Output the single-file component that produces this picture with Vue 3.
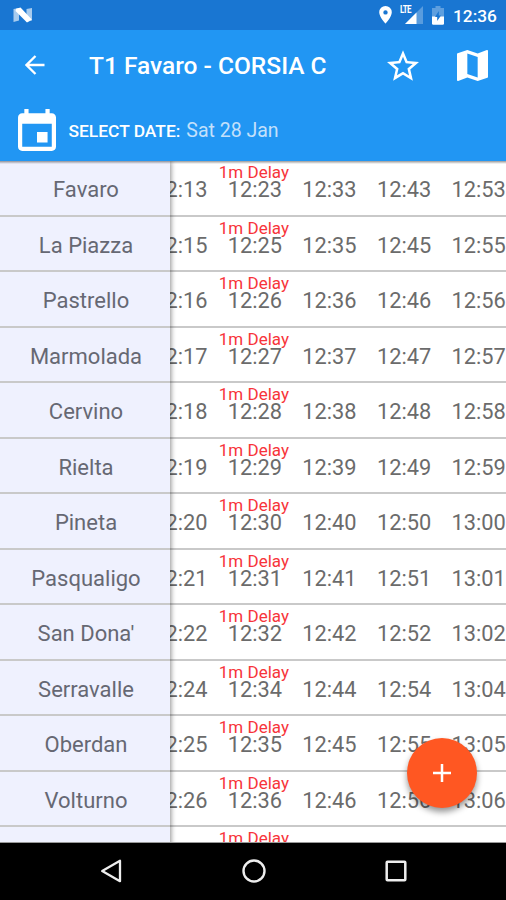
<script setup>
const names = ['Favaro', 'La Piazza', 'Pastrello', 'Marmolada', 'Cervino', 'Rielta', 'Pineta', 'Pasqualigo', "San Dona'", 'Serravalle', 'Oberdan', 'Volturno']
const starts = [13, 15, 16, 17, 18, 19, 20, 21, 22, 24, 25, 26]
const format = (m) => `${12 + Math.floor(m / 60)}:${String(m % 60).padStart(2, '0')}`
const rows = names.map((name, i) => ({
  name,
  times: [0, 10, 20, 30, 40].map((step) => format(starts[i] + step)),
}))
// the row that is only partly scrolled into view
rows.push({ name: '', times: ['', '', '', '', ''] })
</script>

<template>
  <div class="screen">
    <div class="status">
      <svg class="nougat" width="20" height="16" viewBox="0 0 20 16">
        <path d="M.5 2 6 1v12.500l-5.500 1.500zM13.500 2 19 1v12.500L13.500 15z" fill="#fff" opacity=".62" />
        <path d="M3 1.800 7.500.5 18.800 12.500 14 15.500 2.500 4z" fill="#fff" />
      </svg>
      <svg class="pin" width="13" height="18" viewBox="0 0 13 18">
        <path fill="#fff" fill-rule="evenodd" d="M6.5 0A6.3 6.3 0 0 0 .2 6.3C.2 11 6.5 17.7 6.5 17.7S12.800 11 12.800 6.300A6.300 6.300 0 0 0 6.500 0zm0 4.200a2.200 2.200 0 1 1 0 4.400 2.200 2.200 0 0 1 0-4.400z" />
      </svg>
      <div class="signal">
        <svg width="18" height="18" viewBox="0 0 18 18">
          <path d="M18 0v18H0z" fill="#fff" opacity=".28" />
          <path d="M11.500 6.500V18H0z" fill="#fff" />
        </svg>
        <span class="lte">LTE</span>
      </div>
      <svg class="battery" width="12" height="19" viewBox="0 0 12 19">
        <path d="M3.500 0h5v2H12v9H0V2h3.500z" fill="#fff" opacity=".3" />
        <path d="M0 10.500h12V17.500a1.300 1.300 0 0 1-1.300 1.300H1.300A1.300 1.300 0 0 1 0 17.500z" fill="#fff" />
        <path d="M6.800 5v4.500H9L5.200 15v-4H3z" fill="#1976d2" />
      </svg>
      <span class="clock">12:36</span>
    </div>

    <header class="bar">
      <svg class="back" width="20" height="20" viewBox="0 0 20 20">
        <path d="M19.500 10H1.500M10.500 1 1.500 10l9 9" fill="none" stroke="#fff" stroke-width="2.300" />
      </svg>
      <h1>T1 Favaro - CORSIA C</h1>
      <svg class="star" width="32" height="31" viewBox="2 2 20 19">
        <path fill="#fff" d="M22 9.240l-7.190-.620L12 2 9.190 8.630 2 9.240l5.460 4.730L5.820 21 12 17.270 18.180 21l-1.630-7.030L22 9.240zM12 15.400l-3.760 2.270 1-4.280-3.320-2.880 4.380-.380L12 6.100l1.710 4.040 4.380.380-3.320 2.880 1 4.280L12 15.400z" />
      </svg>
      <svg class="map" width="31" height="31" viewBox="3 3 18 18">
        <path fill="#fff" d="M20.500 3l-.160.030L15 5.100 9 3 3.360 4.900c-.210.070-.360.250-.360.480V20.500c0 .280.220.500.500.500l.160-.030L9 18.900l6 2.100 5.640-1.900c.210-.070.360-.250.360-.480V3.500c0-.280-.220-.500-.500-.500zM15 19l-6-2.110V5l6 2.110V19z" />
      </svg>
    </header>

    <div class="date">
      <svg class="calendar" width="38" height="42" viewBox="3 1 18 20" preserveAspectRatio="none">
        <path fill="#fff" d="M17 12h-5v5h5v-5zM16 1v2H8V1H6v2H5c-1.110 0-1.990.900-1.990 2L3 19c0 1.100.890 2 2 2h14c1.100 0 2-.900 2-2V5c0-1.100-.900-2-2-2h-1V1h-2zm3 18H5V8h14v11z" />
      </svg>
      <span class="label">SELECT DATE:</span>
      <span class="value">Sat 28 Jan</span>
    </div>

    <main class="board">
      <div class="times">
        <div v-for="(row, i) in rows" :key="i" class="row">
          <div v-for="(time, j) in row.times" :key="j" class="cell">
            <span class="delay">{{ j === 1 ? '1m Delay' : '' }}</span>
            <span class="time">{{ time }}</span>
          </div>
        </div>
      </div>
      <div class="stops">
        <div v-for="(row, i) in rows" :key="i" class="row stop">{{ row.name }}</div>
      </div>
      <button class="fab" aria-label="Add">
        <svg width="18" height="18" viewBox="0 0 18 18">
          <path d="M9 0v18M0 9h18" stroke="#fff" stroke-width="2.500" />
        </svg>
      </button>
    </main>

    <nav class="nav">
      <svg width="22" height="24" viewBox="0 0 22 24">
        <path d="M20 1.800v20.400L2.200 12z" fill="none" stroke="#eee" stroke-width="2.300" stroke-linejoin="round" />
      </svg>
      <svg width="24" height="24" viewBox="0 0 24 24">
        <circle cx="12" cy="12" r="10.500" fill="none" stroke="#eee" stroke-width="2.400" />
      </svg>
      <svg width="22" height="22" viewBox="0 0 22 22">
        <rect x="1.700" y="1.700" width="18.600" height="18.600" rx=".8" fill="none" stroke="#eee" stroke-width="2.500" />
      </svg>
    </nav>
  </div>
</template>

<style>
body { margin: 0; }
</style>

<style scoped>
.screen {
  display: flex;
  flex-direction: column;
  width: 506px;
  height: 900px;
  overflow: hidden;
  background: #fff;
  font-family: Roboto, sans-serif;
}
.status {
  display: flex;
  align-items: flex-start;
  box-sizing: border-box;
  height: 30px;
  padding: 6px 0 0 13px;
  background: #1976d2;
  color: #fff;
}
.nougat { margin-top: 1px; }
.pin { margin-left: 346px; }
.signal {
  position: relative;
  width: 20px;
  height: 18px;
  margin-left: 12px;
  padding-left: 1px;
}
.signal svg { display: block; }
.lte {
  position: absolute;
  left: -4px;
  top: -1px;
  padding: 0 1px 1px 0;
  background: #1976d2;
  font: 700 10px/10px Roboto, sans-serif;
  letter-spacing: -0.8px;
  transform: scaleX(0.8);
  transform-origin: left;
}
.battery { margin-left: 7px; }
.clock {
  margin-left: 9px;
  font-size: 17.300px;
  font-weight: 500;
  line-height: 20px;
}
.bar {
  display: flex;
  align-items: center;
  height: 70px;
  padding: 0 18px 0 25px;
  background: #2196f3;
}
.back { margin-bottom: 1px; }
.bar h1 {
  flex: 1;
  margin: 1px 0 0 44px;
  color: #fff;
  font-size: 24.500px;
  font-weight: 500;
  line-height: 32px;
  white-space: nowrap;
}
.star { margin-right: 38px; }
.date {
  display: flex;
  align-items: center;
  height: 61px;
  padding-left: 18px;
  background: #2196f3;
  color: #fff;
}
.calendar { margin: 0 12.500px 2px 0; }
.label { font-size: 17.400px; font-weight: 500; }
.value { margin-left: 6px; font-size: 19.500px; color: #c3e0fb; }
.board {
  position: relative;
  flex: 1;
  display: flex;
  justify-content: flex-end;
  overflow: hidden;
  border-bottom: 1px solid #999;
}
.board::before {
  content: '';
  position: absolute;
  z-index: 1;
  inset: 0 0 auto;
  height: 3px;
  background: linear-gradient(rgba(0, 0, 0, 0.4), rgba(0, 0, 0, 0));
}
.times { flex: none; width: 363px; }
.row {
  box-sizing: border-box;
  height: 55.540px;
  border-bottom: 2px solid #c9c9c9;
}
.times .row { display: flex; }
.cell {
  display: flex;
  flex-direction: column;
  align-items: center;
  flex: none;
  width: 74.600px;
  color: #6b6b6b;
}
.delay {
  height: 15px;
  padding: 2px 2px 0 0;
  color: #f7343a;
  font-size: 17px;
  line-height: 19px;
  white-space: nowrap;
}
.time { font-size: 21.800px; line-height: 24px; }
.stops {
  position: absolute;
  left: 0;
  top: 0;
  width: 170px;
  background: #eff1fe;
  box-shadow: 1px 0 5px rgba(0, 0, 0, 0.45);
}
.stop {
  padding-left: 2px;
  color: #666873;
  font-size: 22px;
  line-height: 57px;
  text-align: center;
}
.fab {
  position: absolute;
  right: 29.500px;
  bottom: 34.500px;
  display: grid;
  place-items: center;
  width: 70px;
  height: 70px;
  padding: 0;
  border: 0;
  border-radius: 50%;
  background: #ff5722;
  box-shadow: 0 4px 6px rgba(0, 0, 0, 0.42);
}
.nav {
  display: flex;
  align-items: center;
  justify-content: center;
  gap: 119.500px;
  box-sizing: border-box;
  height: 57px;
  padding: 0 0 1px 1px;
  background: #000;
}
</style>
